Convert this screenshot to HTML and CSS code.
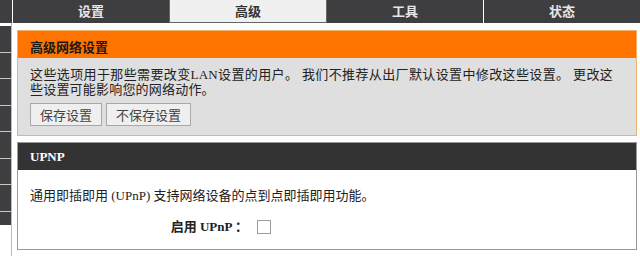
FILE: index.html
```html
<!DOCTYPE html>
<html lang="zh-CN">
<head>
    <meta charset="UTF-8">
    <title>高级网络设置</title>
    <link rel="stylesheet" href="styles.css">
</head>
<body>
    <div class="topnav">
        <div class="nav-edge"></div>
        <div class="tab">设置</div>
        <div class="tab active">高级</div>
        <div class="tab">工具</div>
        <div class="tab tab-sep">状态</div>
    </div>

    <div class="page">
        <div class="sidebar">
            <div class="side-item"></div>
            <div class="side-item"></div>
            <div class="side-item"></div>
            <div class="side-item"></div>
            <div class="side-item"></div>
            <div class="side-item"></div>
            <div class="side-item"></div>
            <div class="side-item last"></div>
        </div>

        <div class="main">
            <div class="intro-box">
                <div class="intro-title">高级网络设置</div>
                <div class="intro-body">
                    <p>这些选项用于那些需要改变LAN设置的用户。 我们不推荐从出厂默认设置中修改这些设置。 更改这些设置可能影响您的网络动作。</p>
                    <div class="buttons">
                        <button class="btn">保存设置</button>
                        <button class="btn">不保存设置</button>
                    </div>
                </div>
            </div>

            <div class="box">
                <div class="box-title">UPNP</div>
                <div class="box-body">
                    <p>通用即插即用 (UPnP) 支持网络设备的点到点即插即用功能。</p>
                    <div class="field">
                        <label class="field-label" for="upnp">启用 UPnP ：</label>
                        <input type="checkbox" id="upnp" class="check">
                    </div>
                </div>
            </div>

            <div class="box">
                <div class="box-title"></div>
            </div>
        </div>
    </div>
</body>
</html>
```

FILE: styles.css
```css
body {
    margin: 0;
    font-family: "Liberation Serif", "Noto Sans CJK SC", serif;
    font-size: 13px;
    color: #222;
    background-color: #fff;
    overflow: hidden;
}

.topnav {
    display: flex;
    height: 23px;
    background-color: #3e3e40;
}

.nav-edge {
    width: 12px;
    border-right: 1px solid #fff;
}

.tab {
    flex: 1;
    text-align: center;
    line-height: 22px;
    font-family: "Noto Sans CJK SC", sans-serif;
    font-size: 13px;
    font-weight: bold;
    color: #e6e6e6;
}

.tab.active {
    background-color: #f0f0f0;
    color: #333;
    border: 1px solid #666;
    border-top: none;
}

.tab-sep {
    border-left: 1px solid #fff;
}

.page {
    display: flex;
    align-items: flex-start;
}

.sidebar {
    width: 11px;
    padding-top: 3px;
    border-right: 1px solid #bbb;
    min-height: 240px;
}

.side-item {
    height: 25.5px;
    background-color: #3e3e40;
    border-bottom: 1px solid #c8c8c8;
}

.side-item.last {
    height: 13px;
    border-bottom: none;
}

.main {
    width: 620px;
    margin-left: 5px;
    padding-top: 7px;
}

.intro-box {
    border: 1px solid #f2b06e;
    background-color: #dfdfdf;
}

.intro-title {
    height: 27px;
    box-sizing: border-box;
    padding: 9px 12px 0;
    line-height: 14px;
    background-color: #ff7300;
    font-family: "Noto Sans CJK SC", sans-serif;
    font-weight: bold;
    color: #1a1a1a;
}

.intro-body {
    padding: 9px 23px 9px 12px;
}

.intro-body p {
    margin: 0;
    line-height: 15px;
    letter-spacing: 0.2px;
    text-align: justify;
}

.buttons {
    display: flex;
    gap: 4px;
    margin-top: 6px;
}

.btn {
    height: 23px;
    padding: 0 9px;
    font-family: "Noto Sans CJK SC", sans-serif;
    font-size: 13px;
    color: #444;
    background-color: #efefef;
    border: 1px solid #a8a8a8;
    border-radius: 0;
}

.box {
    margin-top: 6px;
    border: 1px solid #999;
    background-color: #fff;
}

.box-title {
    height: 27px;
    line-height: 27px;
    padding-left: 12px;
    background-color: #333;
    color: #fff;
    font-weight: bold;
}

.box-body {
    padding: 18px 12px 14px;
}

.box-body p {
    margin: 0;
    line-height: 16px;
}

.field {
    display: flex;
    align-items: center;
    margin-top: 12px;
    height: 19px;
}

.field-label {
    width: 218px;
    text-align: right;
    font-weight: bold;
}

.check {
    appearance: none;
    width: 14px;
    height: 14px;
    margin: 2px 0 0 9px;
    border: 1px solid #999;
    background-color: #fff;
}
```
